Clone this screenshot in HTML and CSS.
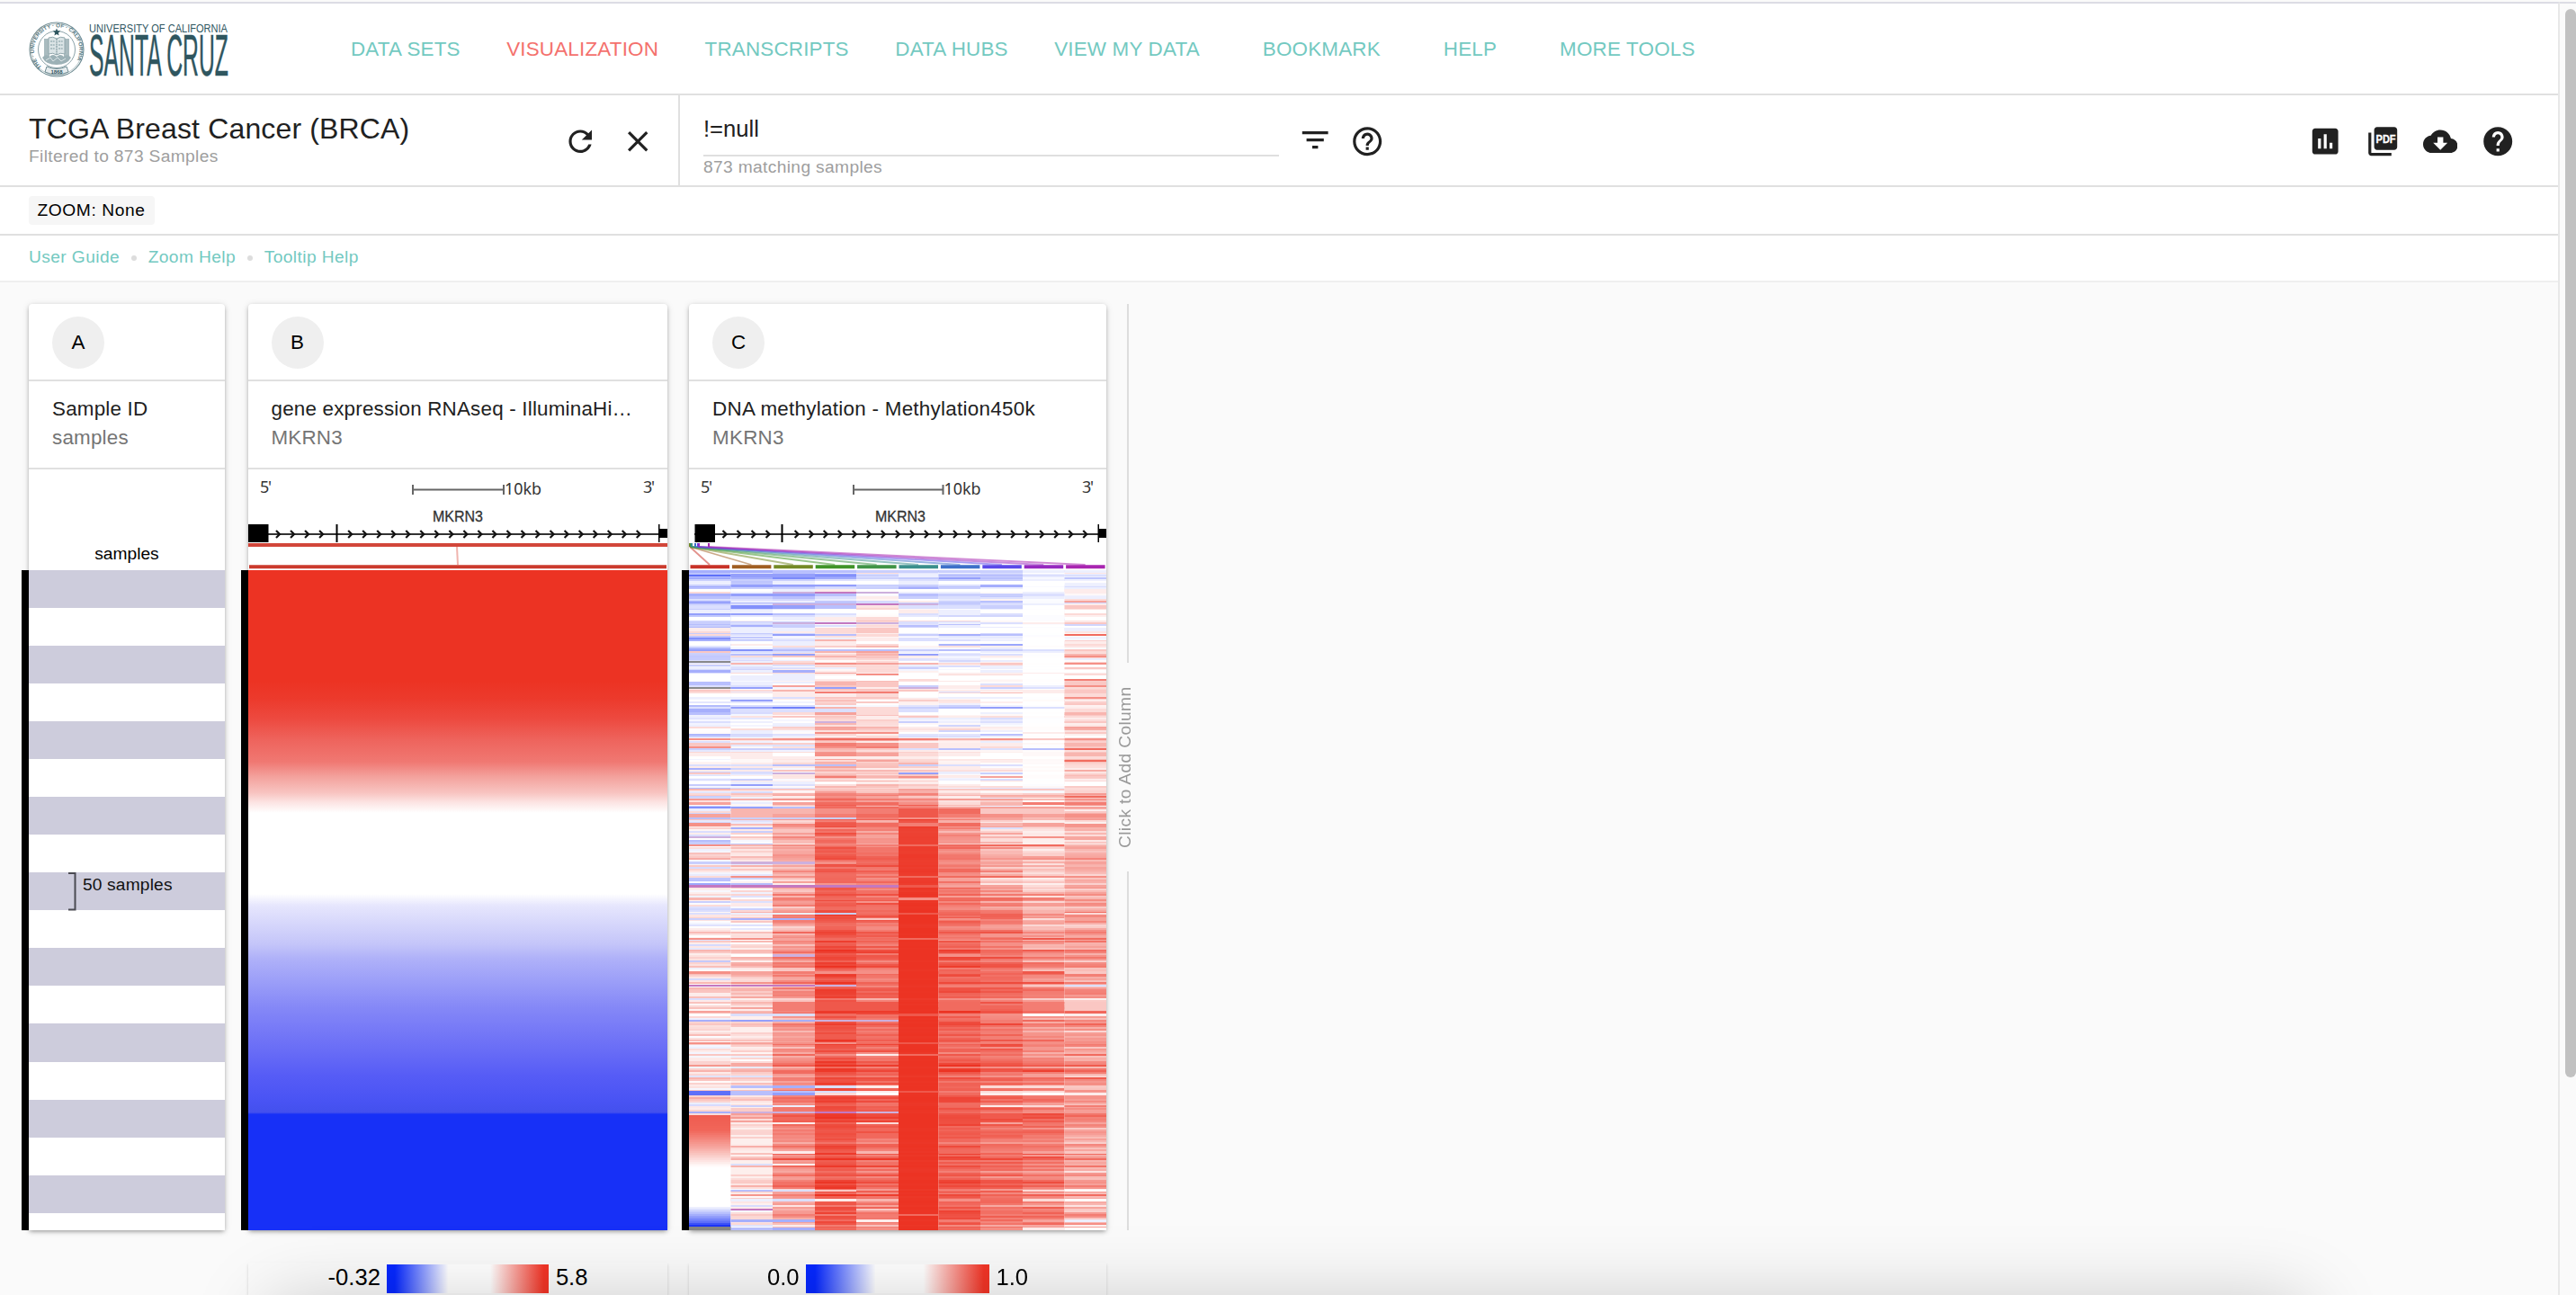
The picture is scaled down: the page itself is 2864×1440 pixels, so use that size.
FILE: index.html
```html
<!DOCTYPE html>
<html lang="en">
<head>
<meta charset="utf-8">
<title>Xena Visualization</title>
<link rel="stylesheet" href="styles.css">
</head>
<body>
<div class="page">
  <div class="content">
    <header class="nav">
      <svg class="logo" viewBox="0 0 224 64" width="224" height="64" fill="#2f565f">
        <defs><path id="ring" d="M14.5 50.5A25.2 25.2 0 1 1 47.5 50.5"/></defs>
        <g fill="none" stroke="#6f8c93">
          <circle cx="31" cy="31" r="30" stroke-width="1.1"/>
          <circle cx="31" cy="31" r="28.4" stroke-width=".5"/>
          <circle cx="31" cy="31" r="20.5" stroke-width=".8"/>
        </g>
        <text class="seal-text"><textPath href="#ring" textLength="112">THE · UNIVERSITY · OF · CALIFORNIA</textPath></text>
        <path d="M31 7.500l1.200 2.800 3 .3-2.300 2 .7 3-2.600-1.600-2.600 1.600.7-3-2.300-2 3-.3z"/>
        <path d="M17 19h6v21h-6zM39 19h6v21h-6z" fill="#a9bbbf"/>
        <path d="M22 18q5-2 9 1 4-3 9-1v18q-5-2-9 1-4-3-9-1z" fill="#dbe4e6" stroke="#8fa6ab" stroke-width="1"/>
        <path d="M31 19v18M24 22h5M24 26h5M24 30h5M33 22h5M33 26h5M33 30h5" stroke="#7f999f" stroke-width="1.2" stroke-dasharray="2 .7"/>
        <path d="M15 40q4-5 8-1 4-4 8 0 4-4 8 0 4-4 8 1-4 8-16 8t-16-8z" fill="#9cb1b6"/>
        <path d="M19 43l5-3 3 4 5-4 4 4 5-3" fill="none" stroke="#dbe4e6"/>
        <path d="M20 50q11 5 22 0l2 6q-13 6-26 0z" fill="#e6ecee" stroke="#6f8c93"/>
        <text x="24.5" y="58" class="seal-year" textLength="13">1868</text>
        <text x="67" y="12" class="logo-top" textLength="154" lengthAdjust="spacingAndGlyphs">UNIVERSITY OF CALIFORNIA</text>
        <text x="67" y="60" class="logo-main" textLength="155" lengthAdjust="spacingAndGlyphs">SANTA CRUZ</text>
      </svg>
      <nav class="links">
        <a>DATA SETS</a><a class="active">VISUALIZATION</a><a>TRANSCRIPTS</a><a>DATA HUBS</a><a class="wide">VIEW MY DATA</a><a class="wide">BOOKMARK</a><a class="wide">HELP</a><a>MORE TOOLS</a>
      </nav>
    </header>

    <section class="toolbar">
      <div class="cohort">
        <div class="cohort-name">
          <h1>TCGA Breast Cancer (BRCA)</h1>
          <p>Filtered to 873 Samples</p>
        </div>
        <svg class="icon" viewBox="0 0 24 24"><path d="M17.65 6.35C16.2 4.9 14.21 4 12 4c-4.42 0-7.99 3.58-7.99 8s3.57 8 7.99 8c3.73 0 6.84-2.55 7.73-6h-2.08c-.82 2.33-3.04 4-5.65 4-3.31 0-6-2.69-6-6s2.69-6 6-6c1.66 0 3.14.69 4.22 1.78L13 11h7V4l-2.35 2.35z"/></svg>
        <svg class="icon" viewBox="0 0 24 24"><path d="M19 6.41L17.59 5 12 10.59 6.41 5 5 6.41 10.59 12 5 17.59 6.41 19 12 13.41 17.59 19 19 17.59 13.41 12z"/></svg>
      </div>
      <div class="search">
        <div class="query">!=null</div>
        <p>873 matching samples</p>
      </div>
      <div class="search-icons">
        <svg class="icon" viewBox="0 0 24 24"><path d="M10 17h4v-2h-4v2zM3 5v2h18V5H3zm3 7h12v-2H6v2z"/></svg>
        <svg class="icon" viewBox="0 0 24 24"><path d="M11 18h2v-2h-2v2zm1-16C6.48 2 2 6.48 2 12s4.48 10 10 10 10-4.48 10-10S17.52 2 12 2zm0 18c-4.41 0-8-3.59-8-8s3.59-8 8-8 8 3.59 8 8-3.59 8-8 8zm0-14c-2.21 0-4 1.79-4 4h2c0-1.1.9-2 2-2s2 .9 2 2c0 2-3 1.75-3 5h2c0-2.25 3-2.5 3-5 0-2.21-1.79-4-4-4z"/></svg>
      </div>
      <div class="actions">
        <svg class="icon" viewBox="0 0 24 24"><path d="M19 3H5c-1.1 0-2 .9-2 2v14c0 1.1.9 2 2 2h14c1.1 0 2-.9 2-2V5c0-1.1-.9-2-2-2zM9 17H7v-7h2v7zm4 0h-2V7h2v10zm4 0h-2v-4h2v4z"/></svg>
        <svg class="icon" viewBox="0 0 24 24"><path d="M8 2h12c1.1 0 2 .9 2 2v12c0 1.1-.9 2-2 2H8c-1.1 0-2-.9-2-2V4c0-1.1.9-2 2-2zM4 6H2v14c0 1.1.9 2 2 2h14v-2H4V6z"/><text class="pdf" x="7.2" y="13.4" textLength="13.8" lengthAdjust="spacingAndGlyphs">PDF</text></svg>
        <svg class="icon" viewBox="0 0 24 24"><path d="M19.35 10.04C18.67 6.59 15.64 4 12 4 9.11 4 6.6 5.64 5.35 8.04 2.34 8.36 0 10.91 0 14c0 3.31 2.69 6 6 6h13c2.76 0 5-2.24 5-5 0-2.64-2.05-4.78-4.65-4.96zM17 13l-5 5-5-5h3V9h4v4h3z"/></svg>
        <svg class="icon" viewBox="0 0 24 24"><path d="M12 2C6.48 2 2 6.48 2 12s4.48 10 10 10 10-4.48 10-10S17.52 2 12 2zm1 17h-2v-2h2v2zm2.07-7.75l-.9.92C13.45 12.9 13 13.5 13 15h-2v-.5c0-1.1.45-2.1 1.17-2.83l1.24-1.26c.37-.36.59-.86.59-1.41 0-1.1-.9-2-2-2s-2 .9-2 2H8c0-2.21 1.79-4 4-4s4 1.79 4 4c0 .88-.36 1.68-.93 2.25z"/></svg>
      </div>
    </section>

    <section class="zoombar"><span class="badge">ZOOM: None</span></section>
    <section class="helpbar"><a>User Guide</a><i></i><a>Zoom Help</a><i></i><a>Tooltip Help</a></section>

    <main class="columns">
      <article class="column col-a">
        <div class="card">
          <div class="card-top"><span class="letter">A</span></div>
          <div class="card-title"><h2>Sample ID</h2><p>samples</p></div>
          <div class="sample-label">samples</div>
          <div class="plot stripes">
            <svg width="218" height="734" viewBox="0 0 218 734">
              <path d="M44 337h7.500v40.500h-7.500" fill="none" stroke="#4a4a52" stroke-width="2"/>
              <text x="60" y="356" class="stripe-text">50 samples</text>
            </svg>
          </div>
        </div>
      </article>

      <article class="column col-b">
        <div class="card">
          <div class="card-top"><span class="letter">B</span></div>
          <div class="card-title"><h2>gene expression RNAseq - IlluminaHi…</h2><p>MKRN3</p></div>
          <svg class="track" id="track-b" width="466" height="112" viewBox="0 0 466 112">
            <text x="13" y="26" textLength="13">5'</text>
            <path d="M182 22.500h102M183 17v11M284 17v11" stroke="#666" stroke-width="2"/>
            <text x="285" y="28" textLength="41" lengthAdjust="spacingAndGlyphs">10kb</text>
            <text x="439" y="26" textLength="13">3'</text>
            <text x="205" y="58" class="gene" textLength="56" lengthAdjust="spacingAndGlyphs">MKRN3</text>
            <path d="M0 72h466" stroke="#333" stroke-width="2"/>
            <path d="M0 61h22.500v20H0zM97.500 61h2v20h-2zM456 61h1.500v20h-1.500zM457 66h9v10h-9z"/>
            <g class="arrows"></g>
            <path d="M232 86l1 20" stroke="#f0b4ae" stroke-width="2"/>
            <path d="M0 84h466" stroke="#d2463a" stroke-width="4"/>
            <path d="M1 108.200h464" stroke="#cb3a2c" stroke-width="4"/>
          </svg>
          <div class="plot expression"></div>
        </div>
        <div class="legend"><span>-0.32</span><div class="scale"></div><span>5.8</span></div>
      </article>

      <article class="column col-c">
        <div class="card">
          <div class="card-top"><span class="letter">C</span></div>
          <div class="card-title"><h2>DNA methylation - Methylation450k</h2><p>MKRN3</p></div>
          <svg class="track" id="track-c" width="464" height="112" viewBox="0 0 464 112">
            <text x="13" y="26" textLength="13">5'</text>
            <path d="M182 22.500h101M183 17v11M282.500 17v11" stroke="#666" stroke-width="2"/>
            <text x="283.500" y="28" textLength="41" lengthAdjust="spacingAndGlyphs">10kb</text>
            <text x="437" y="26" textLength="13">3'</text>
            <text x="207" y="58" class="gene" textLength="56" lengthAdjust="spacingAndGlyphs">MKRN3</text>
            <path d="M6 72h458" stroke="#333" stroke-width="2"/>
            <path d="M6.500 61h22.500v20H6.500zM102.500 61h2v20h-2zM454.500 61h1.500v20h-1.500zM455 66h9v10h-9z"/>
            <g class="arrows"></g>
            <g class="probes"></g>
          </svg>
          <canvas class="plot" id="methylation" width="464" height="734"></canvas>
        </div>
        <div class="legend"><span>0.0</span><div class="scale"></div><span>1.0</span></div>
      </article>

      <aside class="add"><i></i><span>Click to Add Column</span><i></i></aside>
    </main>
  </div>
  <div class="gutter"><div class="thumb"></div></div>
  <div class="dock"></div>
</div>
<script src="plots.js"></script>
</body>
</html>
```
FILE: styles.css
```css
* { box-sizing: border-box; margin: 0; padding: 0; }
body {
  width: 2864px; height: 1440px; overflow: hidden;
  background: #fafafa; color: #212121;
  font-family: "Liberation Sans", Arial, sans-serif;
}
h1, h2 { font-weight: 400; }
.page { position: relative; display: flex; height: 1440px; padding-top: 2px; overflow: clip; }
.content { width: 2846px; border-top: 2px solid #dcdce4; border-right: 2px solid #e8e8e8; }
.gutter { width: 18px; border-top: 2px solid #dcdce4; padding: 6px 0 0 6px; }
.thumb { width: 12px; height: 1188px; border-radius: 8px; background: #c1c1c1; }

.nav { display: flex; height: 102px; padding-left: 32px; background: #fff; border-bottom: 2px solid #e0e0e0; }
.logo { margin-top: 20px; overflow: visible; }
.logo-top { font-size: 12px; }
.logo-main { font-size: 65px; stroke: #2f565f; stroke-width: .5px; }
.seal-text { font: 700 6.2px "Liberation Sans", Arial, sans-serif; fill: #5c7c84; }
.seal-year { font: 700 6px "Liberation Sans", Arial, sans-serif; }
.links { display: flex; gap: 51.500px; padding: 38px 0 0 134px; font-size: 22.4px; line-height: 26px; letter-spacing: .2px; color: #73c9c1; white-space: nowrap; }
.links .active { color: #f4716d; }
.links .wide { margin-right: 18.500px; }

.toolbar { display: flex; height: 102px; background: #fff; border-bottom: 2px solid #e0e0e0; }
.icon { width: 38.4px; height: 38.4px; fill: #212121; display: block; flex: none; }
.cohort { display: flex; width: 756px; padding-left: 32px; border-right: 2px solid #e0e0e0; }
.cohort-name { width: 594px; padding-top: 19px; }
.cohort h1 { font-size: 32px; line-height: 36px; letter-spacing: .15px; white-space: nowrap; }
.cohort p { font-size: 19.2px; line-height: 22px; margin-top: 2px; letter-spacing: .35px; color: #9e9e9e; }
.cohort .icon { margin: 31.800px 25.600px 0 0; }
.search { width: 640px; margin-left: 26px; padding-top: 14px; }
.query { height: 54px; padding-top: 8px; font-size: 25.6px; line-height: 30px; border-bottom: 2px solid #dfdfdf; }
.search p { font-size: 19.2px; line-height: 22px; margin-top: 1px; letter-spacing: .35px; color: #9e9e9e; }
.search-icons { display: flex; gap: 19.500px; padding: 31.800px 0 0 21.400px; }
.actions { display: flex; gap: 25.600px; margin-left: auto; padding: 31.800px 48px 0 0; }
.pdf { font: 700 8px "Liberation Sans", Arial, sans-serif; fill: #fff; stroke: #fff; stroke-width: .2px; }

.zoombar { height: 54px; padding: 10px 0 0 32px; background: #fff; border-bottom: 2px solid #e0e0e0; }
.badge { display: block; width: 140px; height: 32px; border-radius: 4px; background: #f6f6f6; color: #000; padding-left: 9.500px; font-size: 19.2px; line-height: 31px; letter-spacing: .6px; white-space: nowrap; }
.helpbar { display: flex; height: 52px; padding: 12px 0 0 32px; background: #fff; border-bottom: 2px solid #efefef; font-size: 19.2px; line-height: 24px; letter-spacing: .4px; color: #73c9c1; white-space: nowrap; }
.helpbar i { width: 6px; height: 6px; border-radius: 3px; background: #ddd; margin: 10px 12.800px 0; }

.columns { display: flex; padding: 24px 0 0 24px; }
.column { padding-left: 8px; }
.col-a { width: 226px; margin-right: 18px; }
.col-b { width: 474px; margin-right: 16px; }
.col-c { width: 472px; margin-right: 16px; }
.card { background: #fff; border-radius: 4px 4px 0 0; box-shadow: 0 2px 5px -1px rgba(0,0,0,.38), 0 1px 8px rgba(0,0,0,.1); }
.card-top { height: 86px; padding: 14px 26px 0; border-bottom: 2px solid #e0e0e0; }
.letter { display: block; width: 58px; height: 58px; border-radius: 50%; background: #efefef; color: #000; font-size: 22.4px; line-height: 57px; text-align: center; }
.card-title { height: 98px; padding: 15px 26px 0; border-bottom: 2px solid #e0e0e0; font-size: 22.4px; line-height: 32px; letter-spacing: .2px; white-space: nowrap; }
.card-title h2 { font-size: 22.4px; line-height: 32px; }
.col-b .card-top, .col-b .card-title { padding-left: 25.500px; }
.col-c .card-title { letter-spacing: .28px; }
.card-title p { color: #757575; }
.sample-label { height: 112px; padding-top: 83px; font-size: 19.2px; line-height: 22px; text-align: center; color: #000; }
.track { display: block; font-family: "Noto Sans", sans-serif; font-size: 18px; fill: #333; }
.track path { fill: #000; }
.track .gene { font-family: "Liberation Sans", Arial, sans-serif; font-size: 17px; stroke: #333; stroke-width: .3px; }
.track .arrows path, .track .probes path { fill: none; }
.plot { display: block; height: 734px; margin-left: -8px; border-left: 8px solid #000; box-sizing: content-box; }
.stripes { background: repeating-linear-gradient(#cdccdc 0 42.040px, #fff 42.040px 84.080px); }
.stripe-text { font-size: 19.2px; letter-spacing: .15px; fill: #111; }
.expression { background: linear-gradient(#ec3323 0, #ec3323 123px, #ec3a2c 143px, #ed4a40 166px, #ee645d 189px, #f07872 213px, #f3a09b 229px, #f8c5c2 248px, #fce3e2 258px, #fff 270px, #fff 360px, #e6e6fd 373px, #c4c5f9 416px, #afb1f9 432px, #9a9df8 459px, #8588f7 486px, #787bf7 508px, #686cf6 535px, #565cf6 562px, #4a54f4 588px, #4350ee 603px, #1730f7 605px); }

.legend { display: flex; align-items: flex-start; justify-content: center; gap: 7.500px; height: 36px; margin-top: 36px; padding-top: 2px; font-size: 25.600px; line-height: 30px; color: #000; background: #fafafa; box-shadow: 0 2px 3px rgba(0,0,0,.16); }
.legend span { margin-top: -1px; }
.scale { width: 180px; height: 32px; background: linear-gradient(90deg, #0628ff 5%, #fff 38%, #fff 64%, #f23527 97%); }
.col-c .scale { width: 204px; }

.add { width: 26px; height: 1030px; display: flex; flex-direction: column; align-items: center; }
.add i { width: 2px; height: 399px; background: #ddd; margin-left: -11px; }
.add span { height: 232px; width: 26px; writing-mode: vertical-rl; transform: rotate(180deg); text-align: center; font-size: 19.2px; line-height: 26px; letter-spacing: .35px; color: #999; margin-left: -17px; white-space: nowrap; }

/* Window docked below the fold; only its shadow reaches the page. */
.dock { position: absolute; left: 300px; top: 1450px; width: 2264px; height: 300px; box-shadow: 0 0 80px rgba(0,0,0,.22); }
```
FILE: plots.js
```js
const NS = 'http://www.w3.org/2000/svg';
function path(parent, d, stroke, width) {
  const p = document.createElementNS(NS, 'path');
  p.setAttribute('d', d);
  p.setAttribute('stroke', stroke);
  p.setAttribute('stroke-width', width);
  parent.appendChild(p);
}

// Strand direction arrows along the intron line.
[['#track-b', 33.5, 4], ['#track-c', 40, 4]].forEach(([id, start, skip]) => {
  const g = document.querySelector(id + ' .arrows');
  for (let i = 0; i < 26; i++) {
    if (i === skip) continue;
    const x = start + i * 16.03;
    path(g, `M${x - 2.5} 68l4 4l-4 4`, '#111', 2.2);
  }
});

// Probe positions fanned out to the heatmap columns.
const probeColors = ['#c83228', '#a05f23', '#758a26', '#409428', '#409446', '#3a8f8c', '#3d70c9', '#5a48e8', '#9629bf', '#a826b0'];
const edges = [0, 46.5, 93, 140, 186, 233, 277.5, 324, 371, 417.5, 464];
const probes = document.querySelector('.probes');
const origins = [1, 1, 1, 2, 2, 3, 7, 10, 11, 22];
probeColors.forEach((c, i) => {
  const mid = 23 + i * 46.4;
  path(probes, `M${origins[i]} 86L${mid} 106`, c + '88', 1.8);
});
probeColors.forEach((c, i) => {
  path(probes, `M${origins[i]} 82v4`, c, 2);
  path(probes, `M${1.5 + i * 46.4} 108.200h43.500`, c, 4);
});

// Methylation heatmap: column trends with per-sample variation.
const trend = [
  [0,   [-.4, -.35, -.42, -.25, -.1, -.28, -.28, -.28, -.03, -.05]],
  [30,  [-.25, -.16, -.2, -.1, .02, -.12, -.1, -.1, -.01, .04]],
  [60,  [-.2, -.14, -.08, .08, .15, -.03, -.04, -.04, 0, .06]],
  [100, [-.15, -.12, -.04, .12, .2, .0, -.03, -.02, 0, .1]],
  [150, [-.12, -.1, .0, .16, .2, .02, 0, -.02, 0, .2]],
  [190, [-.03, .05, .1, .33, .28, .12, .03, .02, .01, .22]],
  [205, [.02, .05, .12, .42, .3, .18, .05, .04, .03, .28]],
  [240, [-.08, -.03, .06, .3, .25, .22, .04, .03, 0, .18]],
  [255, [.02, .06, .18, .62, .48, .5, .16, .1, .08, .32]],
  [275, [.05, .1, .42, .82, .62, .93, .52, .32, .22, .38]],
  [330, [.08, .1, .4, .78, .68, .96, .64, .42, .28, .4]],
  [380, [.05, .1, .48, .84, .74, 1, .7, .58, .42, .48]],
  [450, [.16, .25, .5, .86, .72, 1, .78, .72, .55, .5]],
  [550, [.15, .18, .55, .88, .75, 1, .8, .72, .6, .5]],
  [604, [.2, .25, .7, .9, .8, 1, .82, .76, .72, .55]],
  [670, [0, .22, .62, .88, .75, 1, .82, .74, .7, .5]],
  [734, [0, .12, .35, .82, .55, 1, .82, .68, .55, .35]]
];
function mean(y, c) {
  let i = 0;
  while (i < trend.length - 2 && trend[i + 1][0] < y) i++;
  const [y0, a] = trend[i], [y1, b] = trend[i + 1];
  return a[c] + (b[c] - a[c]) * (y - y0) / (y1 - y0);
}
// Individual samples: offset, height, one code per probe.
// 1-9 hypermethylated, a-i hypomethylated, 0 neutral, p/q mixed, x missing, . trend.
const marks = [
  [0, 3, 'eeddccccaa'], [4, 4, 'dfffbaccaa'], [5, 2, 'iffgcaddbb'], [10, 2, 'cccbabccaa'],
  [12, 4, 'a.a00a000.'], [16, 2, 'cfffccbe0a'], [19, 2, 'dccbceca0a'], [21, 3, '00a1000001'],
  [24, 2, '2apqpaa.a.'], [26, 3, 'effd.dccb.'], [29, 3, 'dcdb1cb.aa'], [34, 2, 'eaa..1...5'],
  [37, 2, 'cbppqpcba1'], [39, 4, 'bgfd.bbc03'], [44, 4, 'aa0001a000'], [48, 2, 'ffdb.bab02'], [52, 4, '00a12000.0'],
  [57, 2, 'ccca2bb.01'], [58, 2, 'cbpqpbab13'], [61, 2, 'cecb2da00.'], [64, 4, '1aa230000a'], [68, 2, '2a1230000.'],
  [71, 2, '2bfd2ced.8'], [75, 3, 'gbaa1b..0.'], [77, 2, 'ecb41bba0.'], [79, 3, '00a1000001'], [82, 2, '01a120..02'],
  [88, 3, 'fgdddcdcb3'], [90, 2, '3bb45a0aa2'], [93, 2, 'cdf24fbb.4'], [95, 2, '.23431.1.6'],
  [101, 2, 'xa2.20..0.'], [103, 2, '.4365423.6'], [105, 2, 'cab.2a..00'], [108, 2, 'abb.2c0a03'],
  [111, 3, 'eae.2.0a00'], [114, 2, 'b2251.1111'], [115, 2, '00a160..02'], [117, 4, '0aa0000000'], [121, 2, '0aa1020..7'],
  [124, 4, 'da.4300..3'], [128, 2, 'bb533c12a6'], [130, 2, 'xf.f1p1cb2'], [133, 2, '324.331113'],
  [135, 2, '2.1770..13'], [137, 4, '0011200002'], [141, 2, 'aab33.aa.6'], [144, 2, '0f0.0..0.1'], [148, 2, '000.0..003'],
  [152, 2, 'bfh42cdfb1'], [154, 4, 'ebbb2b000.'], [158, 3, 'd.25200..4'], [162, 2, 'a.33131..2'],
  [168, 2, 'ba.p2cab.3'], [174, 2, '20.54111.5'], [180, 2, '.a.660001.'], [184, 2, 'cba12bba.0'],
  [187, 2, '6468874636'], [192, 4, '3..76311.4'], [196, 2, '6..67312.3'], [198, 2, 'ccc43bdbd8'],
  [203, 4, '11065210.4'], [207, 3, '0111110002'], [211, 2, '0.125..1.8'], [216, 2, 'bbdd.cbb02'], [220, 2, 'e....111.1'],
  [225, 2, '3bp33fac02'], [229, 2, '00.74615.3'], [232, 2, 'bc.2..a..1'], [235, 3, '0aa0110000'], [238, 2, '.fb.4310.0'],
  [243, 2, '4333353332'], [251, 2, 'c.16531448'], [258, 3, '5.58862477'], [263, 2, 'gfd8875555'],
  [265, 6, '.44679833.'], [271, 4, '5457897656'], [275, 2, 'dccc7655.5'], [281, 4, '6..987845.'],
  [286, 2, '.e.6..7b.4'], [296, 2, 'p3.65.646.'], [305, 2, '6467788884'], [324, 3, 'cpp6..65.5'],
  [340, 2, '26688888.6'], [350, 3, 'qqqqq95525'], [364, 3, '4.7886887.'], [381, 2, 'baac.9...2'],
  [387, 2, 'cee.3.6.2.'], [409, 2, '6658887898'], [427, 3, '.0p...6...'], [446, 3, '65766.8.93'],
  [461, 2, 'qqqp..773b'], [480, 10, '..799.8.73'], [493, 3, '0bb8.97601'], [500, 2, 'efepp.878.'],
  [525, 2, '6566897766'], [538, 2, '3386189868'], [573, 3, '.deb1..223'], [579, 2, 'iddb19722.'],
  [581, 3, 'idf20.8101'], [595, 2, '.ca...8127'], [602, 2, 'eppqp.8.6.'], [614, 2, '.11.2..5..'],
  [646, 3, '..1.4.8.53'], [660, 2, '.b1.....6.'], [689, 2, '.db3..7.20'], [699, 3, '.ab14.6.20'],
  [710, 2, '.q..3.8..3'], [716, 2, '.377.8.777'], [722, 3, '.ee.1.7.5a'], [731, 3, '.de86.8610']
];
const stopsFirst = [[605, .8], [622, .75], [640, .45], [655, .15], [663, 0], [706, 0], [715, -.35], [724, -.7], [728, -.98]];
let seed = 20147;
const rnd = () => (seed = (seed * 16807) % 2147483647) / 2147483647;
const gauss = () => rnd() + rnd() + rnd() - 1.5;
function color(v) {
  v = Math.max(-1, Math.min(1, v));
  const to = v > 0 ? [236, 51, 35] : [23, 48, 247];
  const t = Math.abs(v);
  return `rgb(${to.map(x => Math.round(255 + (x - 255) * t)).join()})`;
}
function coded(ch) {
  if (ch === 'x') return '#8a8a8a';
  if (ch === 'p') return '#cdb0dd';
  if (ch === 'q') return '#c478c0';
  if (ch === '0') return '#fff';
  if (ch >= '1' && ch <= '9') return color(+ch / 11);
  return color(-(ch.charCodeAt(0) - 96) / 13);
}
const ctx = document.getElementById('methylation').getContext('2d');
ctx.fillStyle = '#fff';
ctx.fillRect(0, 0, 464, 734);
for (let y = 0; y < 734; y += 2) {
  const shared = gauss() * .3 - (rnd() < .05 ? .3 : 0);
  for (let c = 0; c < 10; c++) {
    const m = mean(y, c);
    const calm = y < 250 ? .7 : 1;
    const room = c === 5 && y > 285 ? .05 : c === 8 && y < 240 ? .05 : calm * (.35 + .65 * (1 - Math.min(1, Math.abs(m))));
    let v = m + (shared + gauss() * .2) * room;
    if (m > .2 && v < .08) v = .08;
    if (c === 0 && y >= 605) {
      let i = 0;
      while (i < stopsFirst.length - 2 && stopsFirst[i + 1][0] < y) i++;
      const [y0, a] = stopsFirst[i], [y1, b] = stopsFirst[i + 1];
      v = a + (b - a) * Math.min(1, (y - y0) / (y1 - y0));
    }
    ctx.fillStyle = color(v);
    ctx.fillRect(edges[c], y, edges[c + 1] - edges[c], 2);
  }
}
marks.forEach(([y, h, codes]) => {
  [...codes].forEach((ch, c) => {
    if (ch === '.') return;
    ctx.fillStyle = coded(ch);
    ctx.fillRect(edges[c], y, edges[c + 1] - edges[c], h);
  });
});
ctx.fillStyle = '#858585';
ctx.fillRect(0, 730, 46.5, 4);
```
